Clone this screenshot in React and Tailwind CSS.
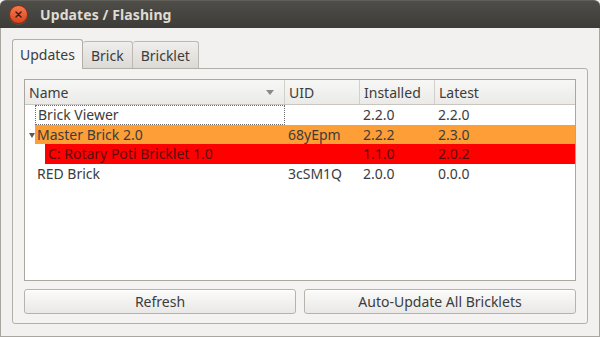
import { useState } from 'react'

const ROWS = [
  { name: 'Brick Viewer', uid: '', installed: '2.2.0', latest: '2.2.0', bg: '', focus: true },
  { name: 'Master Brick 2.0', uid: '68yEpm', installed: '2.2.2', latest: '2.3.0', bg: 'bg-[#fd9e37]', arrow: true },
  { name: 'C: Rotary Poti Bricklet 1.0', uid: '', installed: '1.1.0', latest: '2.0.2', bg: 'bg-[#ff0000]', red: true },
  { name: 'RED Brick', uid: '3cSM1Q', installed: '2.0.0', latest: '0.0.0', bg: '' },
]

function CloseButton() {
  return (
    <div className="w-[19px] h-[19px] rounded-full bg-gradient-to-b from-[#f5794d] to-[#d9431b] border border-[#8e2d12] flex items-center justify-center shadow-[0_1px_0_rgba(255,255,255,0.1)]">
      <svg width="7" height="7" viewBox="0 0 7 7">
        <path d="M1 1 L6 6 M6 1 L1 6" stroke="#3b1a10" strokeWidth="1.4" strokeLinecap="round" />
      </svg>
    </div>
  )
}

function Tab({ label, active }) {
  if (active) {
    return (
      <div className="h-[30px] px-[7px] flex items-center border border-b-0 border-[#b3afa8] rounded-t-[3px] bg-[#f6f5f4] relative z-10 -mb-px text-[14px] text-[#3c3c3c]">
        {label}
      </div>
    )
  }
  return (
    <div className="h-[27px] px-[8px] flex items-center border border-l-0 border-b-0 border-[#bdb9b2] rounded-t-[3px] bg-gradient-to-b from-[#efeeec] to-[#dcdad6] text-[14px] text-[#3c3c3c]">
      {label}
    </div>
  )
}

function Button({ children }) {
  return (
    <button className="flex-1 h-[25px] rounded-[3px] border border-[#b7b3ac] bg-gradient-to-b from-[#fbfbfa] to-[#e9e8e6] text-[14px] text-[#3c3c3c] shadow-[inset_0_1px_0_#ffffff]">
      {children}
    </button>
  )
}

export default function App() {
  const [tab] = useState('Updates')

  return (
    <div className="w-[600px] h-[337px] overflow-hidden bg-[#f2f1f0]" style={{ fontFamily: '"Noto Sans", "DejaVu Sans", sans-serif' }}>
      {/* Title bar */}
      <div className="h-[28px] rounded-t-[6px] bg-gradient-to-b from-[#4e4d48] to-[#3d3c38] border-t border-[#5f5e59] flex items-center pl-[9px]">
        <CloseButton />
        <span className="ml-[12px] text-[14px] font-bold text-[#dfdbd2] tracking-[0.1px]">Updates / Flashing</span>
      </div>

      {/* Body */}
      <div className="h-[309px] border-x border-b border-[#a9a6a0] px-[11px] pt-[11px]">
        <div className="flex items-end h-[29px]">
          {['Updates', 'Brick', 'Bricklet'].map((t) => (
            <Tab key={t} label={t} active={t === tab} />
          ))}
        </div>

        {/* Tab pane */}
        <div className="h-[256px] border border-[#b3afa8] rounded-b-[3px] rounded-tr-[3px] bg-[#f4f3f2] px-[11px] pt-[10px]">
          {/* Table */}
          <div className="h-[202px] border border-[#aaa7a1] bg-white text-[14px] text-[#3c3c3c]">
            <div className="flex h-[25px] bg-gradient-to-b from-[#f7f7f6] to-[#ebeae8] border-b border-[#c9c6c0]">
              <div className="w-[260px] pl-[4px] flex items-center justify-between pr-[10px] border-r border-[#d3d0ca]">
                <span>Name</span>
                <svg width="8" height="5" viewBox="0 0 8 5"><path d="M0 0 H8 L4 5 Z" fill="#8a8985" /></svg>
              </div>
              <div className="w-[75px] pl-[4px] flex items-center border-r border-[#d3d0ca]">UID</div>
              <div className="w-[75px] pl-[4px] flex items-center border-r border-[#d3d0ca]">Installed</div>
              <div className="flex-1 pl-[4px] flex items-center">Latest</div>
            </div>
            {ROWS.map((r) => (
              <div key={r.name} className="flex h-[19.5px] items-center relative">
                {r.arrow && (
                  <svg className="absolute left-[4px] top-[8px]" width="6" height="5" viewBox="0 0 6 5">
                    <path d="M0 0 H6 L3 5 Z" fill="#5a5955" />
                  </svg>
                )}
                <div className={`flex h-full items-center ${r.red ? 'ml-[20px]' : 'ml-[10px]'} flex-1 ${r.bg} ${r.red ? 'text-[#5c0f0f]' : ''}`}>
                  <div className={`${r.red ? 'w-[240px] pl-[3px]' : 'w-[250px] pl-[2px]'} h-full flex items-center ${r.focus ? 'border border-dotted border-[#6b6b6b]' : ''}`}>
                    {r.name}
                  </div>
                  <div className="w-[75px] pl-[3px]">{r.uid}</div>
                  <div className="w-[75px] pl-[3px]">{r.installed}</div>
                  <div className="flex-1 pl-[3px]">{r.latest}</div>
                </div>
              </div>
            ))}
          </div>

          <div className="flex gap-[8px] mt-[8px]">
            <Button>Refresh</Button>
            <Button>Auto-Update All Bricklets</Button>
          </div>
        </div>
      </div>
    </div>
  )
}
